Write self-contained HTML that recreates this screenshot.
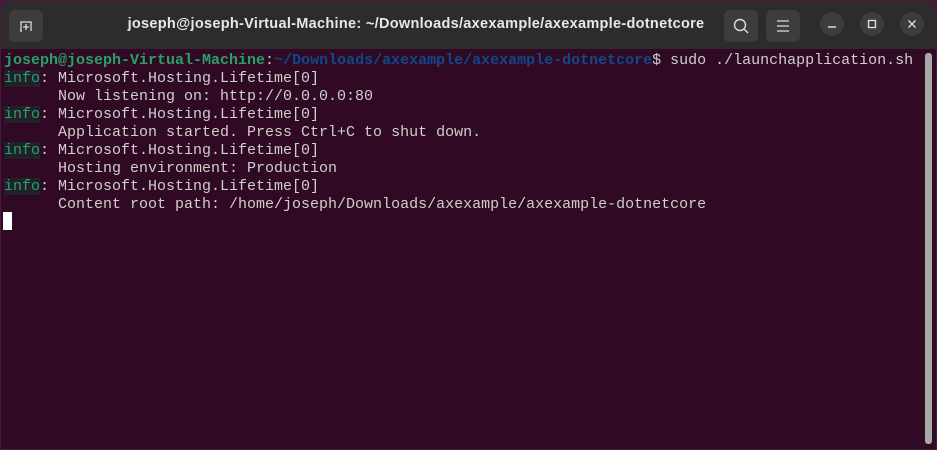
<!DOCTYPE html>
<html><head><meta charset="utf-8"><style>
body{margin:0;width:937px;height:450px;background:#4a1a3d;overflow:hidden;font-family:"Liberation Sans",sans-serif}
.win{position:absolute;left:1px;top:1px;width:935px;height:448px;border-radius:10px 10px 0 0;overflow:hidden;background:#300a24}
.hd{position:absolute;left:0;top:0;width:935px;height:48px;background:#2c2c2c}
.title{position:absolute;left:0;width:830px;top:15px;text-align:center;color:#e8e8e8;font-weight:bold;font-size:14.5px;letter-spacing:0.3px}
.btn{position:absolute;top:9px;width:34px;height:32px;background:#3d3d3d;border-radius:6px}
.cb{position:absolute;top:11px;width:24px;height:24px;border-radius:50%;background:#3d3d3d}
pre{position:absolute;left:3px;top:51px;margin:0;font:15px/18px "Liberation Mono",monospace;color:#d0cfcc}
.g{color:#26a269;font-weight:bold}.b{color:#12488b;font-weight:bold}.i{color:#26a269;background:#22202a}
.cur{position:absolute;width:9px;height:18px;background:#fff}
.sb{position:absolute;left:924px;top:52px;width:7px;height:391px;background:#a8a8a8;border-radius:3px}
</style></head><body><div class="win">
<div class="hd">
<div class="btn" style="left:8px"><svg width="34" height="32"><path d="M12 21V12h10v9M17 14v6M14 17h6M11 21h2" stroke="#ddd" stroke-width="1.3" fill="none"/></svg></div>
<div class="title">joseph@joseph-Virtual-Machine: ~/Downloads/axexample/axexample-dotnetcore</div>
<div class="btn" style="left:723px"><svg width="34" height="32"><circle cx="16" cy="15" r="5.5" stroke="#ddd" stroke-width="1.4" fill="none"/><path d="M20 19l4 4" stroke="#ddd" stroke-width="1.4"/></svg></div>
<div class="btn" style="left:765px"><svg width="34" height="32"><path d="M11 11h12M11 16h12M11 21h12" stroke="#ddd" stroke-width="1.3"/></svg></div>
<div class="cb" style="left:819px"><svg width="24" height="24"><path d="M8 15h8" stroke="#ddd" stroke-width="1.5"/></svg></div>
<div class="cb" style="left:859px"><svg width="24" height="24"><rect x="8.5" y="8.5" width="7" height="7" stroke="#ddd" stroke-width="1.4" fill="none"/></svg></div>
<div class="cb" style="left:899px"><svg width="24" height="24"><path d="M8.5 8.5l7 7M15.5 8.5l-7 7" stroke="#ddd" stroke-width="1.4"/></svg></div>
</div>
<pre><span class="g">joseph@joseph-Virtual-Machine</span>:<span class="b">~/Downloads/axexample/axexample-dotnetcore</span>$ sudo ./launchapplication.sh
<span class="i">info</span>: Microsoft.Hosting.Lifetime[0]
      Now listening on: http://0.0.0.0:80
<span class="i">info</span>: Microsoft.Hosting.Lifetime[0]
      Application started. Press Ctrl+C to shut down.
<span class="i">info</span>: Microsoft.Hosting.Lifetime[0]
      Hosting environment: Production
<span class="i">info</span>: Microsoft.Hosting.Lifetime[0]
      Content root path: /home/joseph/Downloads/axexample/axexample-dotnetcore</pre>
<div class="cur" style="left:2px;top:211px"></div>
<div class="sb"></div>
</div></body></html>
